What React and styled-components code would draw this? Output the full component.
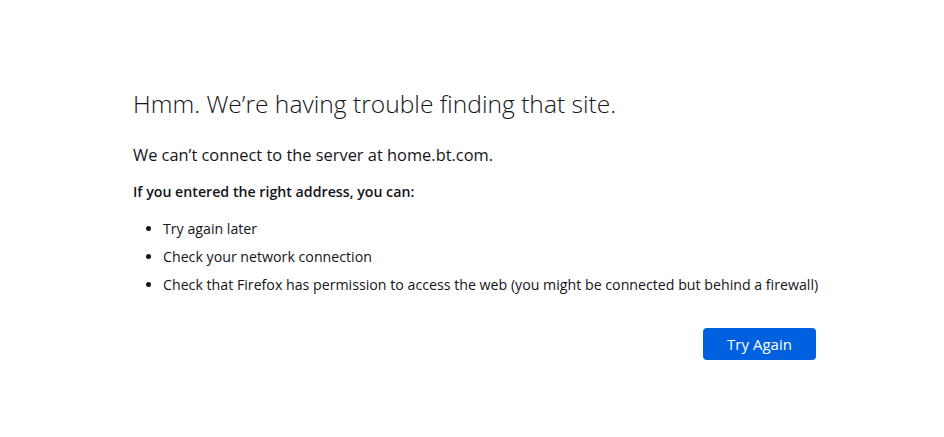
import React from "react";
import styled, { createGlobalStyle } from "styled-components";

const Global = createGlobalStyle`
  html, body { margin: 0; padding: 0; background: #ffffff; }
  body { font-family: "Open Sans", "Noto Sans", sans-serif; color: #15141a; }
`;

const Page = styled.main`
  width: 944px;
  height: 437px;
  box-sizing: border-box;
  padding: 86px 0 0 133px;
`;

const Container = styled.div`
  width: 683px;
  display: flex;
  flex-direction: column;
`;

const Title = styled.h1`
  margin: 0;
  font-size: 24.6px;
  font-weight: 300;
  line-height: 36px;
  color: #15141a;
`;

const Lead = styled.p`
  margin: 22px 0 0;
  font-size: 16.4px;
  line-height: 22px;
`;

const Sub = styled.p`
  margin: 16px 0 0;
  font-size: 14.2px;
  font-weight: 600;
  line-height: 20px;
`;

const List = styled.ul`
  margin: 17px 0 0;
  padding: 0 0 0 30px;
  display: flex;
  flex-direction: column;
  gap: 8px;
`;

const Item = styled.li`
  font-size: 14.2px;
  line-height: 20px;
  white-space: nowrap;
`;

const Actions = styled.div`
  display: flex;
  justify-content: flex-end;
  margin-top: 33px;
`;

const Button = styled.button`
  width: 113px;
  height: 32px;
  border: none;
  border-radius: 4px;
  background: #0061e0;
  color: #ffffff;
  font-family: inherit;
  font-size: 15px;
  font-weight: 500;
  cursor: pointer;
`;

export default function App() {
  return (
    <>
      <Global />
      <Page>
        <Container>
          <Title>Hmm. We’re having trouble finding that site.</Title>
          <Lead>We can’t connect to the server at home.bt.com.</Lead>
          <Sub>If you entered the right address, you can:</Sub>
          <List>
            <Item>Try again later</Item>
            <Item>Check your network connection</Item>
            <Item>Check that Firefox has permission to access the web (you might be connected but behind a firewall)</Item>
          </List>
          <Actions>
            <Button>Try Again</Button>
          </Actions>
        </Container>
      </Page>
    </>
  );
}
